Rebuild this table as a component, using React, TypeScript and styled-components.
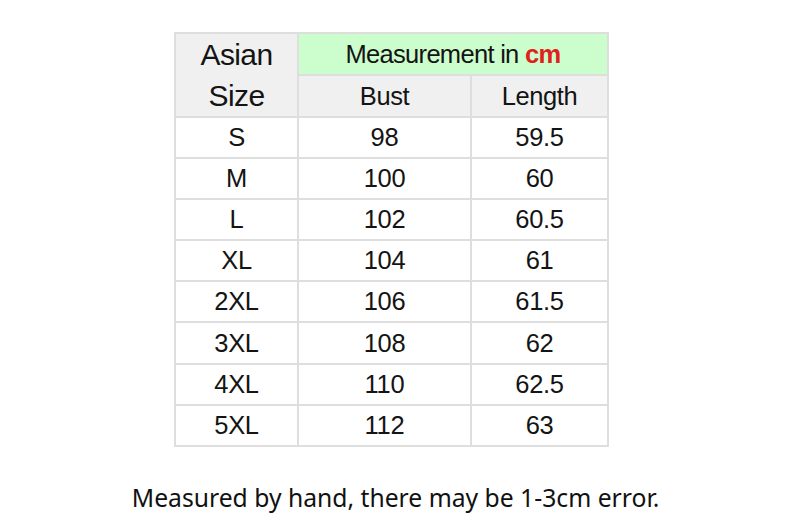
import styled, { createGlobalStyle } from "styled-components";

const sizes = [
  { size: "S", bust: "98", length: "59.5" },
  { size: "M", bust: "100", length: "60" },
  { size: "L", bust: "102", length: "60.5" },
  { size: "XL", bust: "104", length: "61" },
  { size: "2XL", bust: "106", length: "61.5" },
  { size: "3XL", bust: "108", length: "62" },
  { size: "4XL", bust: "110", length: "62.5" },
  { size: "5XL", bust: "112", length: "63" },
];

function App() {
  return (
    <>
      <GlobalStyle />
      <Page>
        <TableWrap>
          <SizeTable>
            <colgroup>
              <col style={{ width: 123 }} />
              <col style={{ width: 173 }} />
              <col style={{ width: 137 }} />
            </colgroup>
            <thead>
              <HeadRow>
                <SizeHead rowSpan={2}>
                  Asian
                  <br />
                  Size
                </SizeHead>
                <GreenHead colSpan={2}>
                  Measurement in <Unit>cm</Unit>
                </GreenHead>
              </HeadRow>
              <HeadRow>
                <HeadCell>Bust</HeadCell>
                <HeadCell>Length</HeadCell>
              </HeadRow>
            </thead>
            <tbody>
              {sizes.map((row) => (
                <DataRow key={row.size}>
                  <Cell>{row.size}</Cell>
                  <Cell>{row.bust}</Cell>
                  <Cell>{row.length}</Cell>
                </DataRow>
              ))}
            </tbody>
          </SizeTable>
        </TableWrap>
        <Note>Measured by hand, there may be 1-3cm error.</Note>
      </Page>
    </>
  );
}

export default App;

const GlobalStyle = createGlobalStyle`
  html, body {
    margin: 0;
    padding: 0;
    background: #fff;
  }
`;

const Page = styled.div`
  width: 791px;
  height: 531px;
  display: flex;
  flex-direction: column;
  background: #fff;
`;

const TableWrap = styled.div`
  padding: 32px 0 0 174px;
`;

const SizeTable = styled.table`
  border-collapse: collapse;
  table-layout: fixed;
  width: 433px;
  font-family: "Liberation Sans", Arial, sans-serif;
  color: #141414;
  td, th {
    border: 2px solid #dedede;
    padding: 0;
    text-align: center;
    font-weight: normal;
  }
`;

const HeadRow = styled.tr`
  height: 40px;
`;

const DataRow = styled.tr`
  height: 41.1px;
`;

const SizeHead = styled.th`
  background: #f0f0f0;
  font-size: 30px;
  line-height: 41px;
  letter-spacing: -0.6px;
`;

const GreenHead = styled.th`
  background: #ccfdcc;
  font-size: 25.5px;
  letter-spacing: -0.7px;
`;

const Unit = styled.span`
  color: #e0211c;
  font-weight: bold;
`;

const HeadCell = styled.th`
  background: #f0f0f0;
  font-size: 25.5px;
  letter-spacing: -0.4px;
`;

const Cell = styled.td`
  background: #fff;
  font-size: 25.5px;
  letter-spacing: -0.3px;
`;

const Note = styled.p`
  margin: 35px 0 0;
  text-align: center;
  font-family: "Noto Sans", "Open Sans", sans-serif;
  font-size: 24.7px;
  line-height: 32px;
  color: #111;
`;
